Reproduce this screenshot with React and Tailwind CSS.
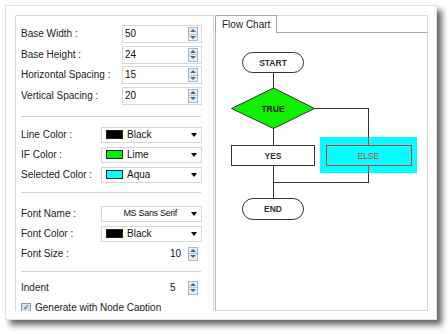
const FONT = { fontFamily: '"Liberation Sans", Arial, sans-serif' };

function Spinner() {
  return (
    <div className="shrink-0 flex flex-col w-[10px] h-[14px] border border-[#a9b8c6] bg-[#e6eef5]">
      <div className="flex-1 flex items-center justify-center border-b border-[#b8c6d2]">
        <div className="w-0 h-0 border-l-[3px] border-r-[3px] border-b-[3px] border-l-transparent border-r-transparent border-b-[#4a6a8a]" />
      </div>
      <div className="flex-1 flex items-center justify-center">
        <div className="w-0 h-0 border-l-[3px] border-r-[3px] border-t-[3px] border-l-transparent border-r-transparent border-t-[#4a6a8a]" />
      </div>
    </div>
  );
}

function NumRow({ label, value }) {
  return (
    <div className="flex items-center justify-between h-[18px]">
      <span>{label}</span>
      <div className="w-[80px] h-[18px] border border-[#d6d6d6] flex items-center justify-between pl-[2px] pr-[3px]">
        <span className="text-[#111]">{value}</span>
        <Spinner />
      </div>
    </div>
  );
}

function Arrow() {
  return (
    <div className="shrink-0 w-0 h-0 border-l-[3.5px] border-r-[3.5px] border-t-[4px] border-l-transparent border-r-transparent border-t-black" />
  );
}

function ColorRow({ label, swatch, value }) {
  return (
    <div className="flex items-center justify-between h-[16px]">
      <span>{label}</span>
      <div className="w-[101px] h-[16px] border border-[#d6d6d6] flex items-center pl-[4px] pr-[4px]">
        <div className="w-[17px] h-[9px] border border-[#222]" style={{ background: swatch }} />
        <span className="ml-[4px] flex-1 text-[#111]">{value}</span>
        <Arrow />
      </div>
    </div>
  );
}

function SmallRow({ label, value }) {
  return (
    <div className="flex items-center justify-between h-[16px]">
      <span>{label}</span>
      <div className="w-[34px] h-[16px] border border-transparent flex items-center justify-between pl-[1px] pr-[3px]">
        <span className="text-[#111]">{value}</span>
        <Spinner />
      </div>
    </div>
  );
}

function Sep() {
  return <div className="h-px bg-[#d0d0d0] w-[180px]" />;
}

export default function App() {
  return (
    <div className="w-[448px] h-[334px] bg-white overflow-hidden text-[10px] text-[#222]" style={FONT}>
      <div className="ml-[5px] mt-[5px] w-[432px] h-[315px] bg-white border border-[#e2e2e2] shadow-[5px_5px_6px_rgba(0,0,0,0.6)] pt-[9px] pl-[9px] flex gap-px">
        {/* Left panel */}
        <div className="w-[199px] h-[296px] border border-[#d8d8d8] border-b-0 overflow-hidden pl-[5px] pr-[11px] pt-[9px] leading-none">
          <div className="flex flex-col gap-[2.5px]">
            <NumRow label="Base Width :" value="50" />
            <NumRow label="Base Height :" value="24" />
            <NumRow label="Horizontal Spacing :" value="15" />
            <NumRow label="Vertical Spacing :" value="20" />
          </div>
          <div className="mt-[11px]"><Sep /></div>
          <div className="mt-[10px] flex flex-col gap-[4px]">
            <ColorRow label="Line Color :" swatch="#000" value="Black" />
            <ColorRow label="IF Color :" swatch="#00ee00" value="Lime" />
            <ColorRow label="Selected Color :" swatch="#00ffff" value="Aqua" />
          </div>
          <div className="mt-[9px]"><Sep /></div>
          <div className="mt-[13px] flex flex-col gap-[4px]">
            <div className="flex items-center justify-between h-[16px]">
              <span>Font Name :</span>
              <div className="w-[101px] h-[16px] border border-[#d6d6d6] flex items-center justify-end pr-[4px]">
                <span className="text-[#111] text-[9px] tracking-[-0.3px] mr-[14px]">MS Sans Serif</span>
                <Arrow />
              </div>
            </div>
            <ColorRow label="Font Color :" swatch="#000" value="Black" />
            <SmallRow label="Font Size :" value="10" />
          </div>
          <div className="mt-[9px]"><Sep /></div>
          <div className="mt-[8px]">
            <SmallRow label="Indent" value="5" />
          </div>
          <div className="mt-[6px] flex items-center h-[12px]">
            <div className="w-[10px] h-[10px] border border-[#8a9aaa] bg-[#d8e0ea] flex items-center justify-center text-[8px] text-[#334] leading-none">✓</div>
            <span className="ml-[4px]">Generate with Node Caption</span>
          </div>
        </div>

        {/* Right panel */}
        <div className="w-[213px] h-[296px] flex flex-col">
          <div className="flex h-[18px]">
            <div className="w-[62px] h-[18px] border border-b-0 border-[#a8a8a8] bg-white flex items-center pl-[6px] leading-none">
              Flow Chart
            </div>
            <div className="flex-1 h-[18px] border-t border-r border-b border-t-[#dcdcdc] border-r-[#dcdcdc] border-b-[#a8a8a8]" />
          </div>
          <div className="flex-1 border-l border-r border-b border-[#d8d8d8] border-l-[#b8b8b8] bg-white relative overflow-hidden">
            <svg width="211" height="278" className="block" style={{ fontFamily: '"Liberation Sans", Arial, sans-serif' }}>
              <g transform="translate(-216,-33)" fill="none" strokeWidth="1">
                <line x1="273.5" y1="72" x2="273.5" y2="88" stroke="#333" />
                <line x1="314" y1="108.5" x2="368.5" y2="108.5" stroke="#333" />
                <line x1="368.5" y1="108" x2="368.5" y2="137" stroke="#333" />
                <line x1="273.5" y1="128" x2="273.5" y2="145" stroke="#333" />
                <line x1="273.5" y1="165" x2="273.5" y2="198" stroke="#333" />
                <line x1="273" y1="182.5" x2="369" y2="182.5" stroke="#333" />
                <line x1="368.5" y1="173" x2="368.5" y2="182" stroke="#333" />

                <rect x="242.5" y="52.5" width="61" height="20" rx="10" fill="#fff" stroke="#333" />
                <text x="273" y="65.5" textAnchor="middle" fontSize="8.5" fontWeight="bold" fill="#333" stroke="none">START</text>

                <polygon points="273.5,88 314.5,108.5 273.5,128.5 231.5,108.5" fill="#11ee00" stroke="#333" />
                <text x="273" y="111.5" textAnchor="middle" fontSize="8.5" fontWeight="bold" fill="#222" stroke="none">TRUE</text>

                <rect x="231.5" y="145.5" width="83" height="20" fill="#fff" stroke="#333" />
                <text x="273" y="158.5" textAnchor="middle" fontSize="8.5" fontWeight="bold" fill="#333" stroke="none">YES</text>

                <rect x="320" y="137" width="97" height="36" fill="#00ffff" stroke="none" />
                <line x1="368.5" y1="137" x2="368.5" y2="145" stroke="#e03030" />
                <line x1="368.5" y1="165" x2="368.5" y2="173" stroke="#e03030" />
                <rect x="326.5" y="145.5" width="85" height="20" fill="none" stroke="#e03030" />
                <text x="368.5" y="158.5" textAnchor="middle" fontSize="8.5" fill="#e03030" stroke="none">ELSE</text>

                <rect x="242.5" y="198.5" width="61" height="21" rx="10.5" fill="#fff" stroke="#333" />
                <text x="273" y="212" textAnchor="middle" fontSize="8.5" fontWeight="bold" fill="#333" stroke="none">END</text>
              </g>
            </svg>
          </div>
        </div>
      </div>
    </div>
  );
}
